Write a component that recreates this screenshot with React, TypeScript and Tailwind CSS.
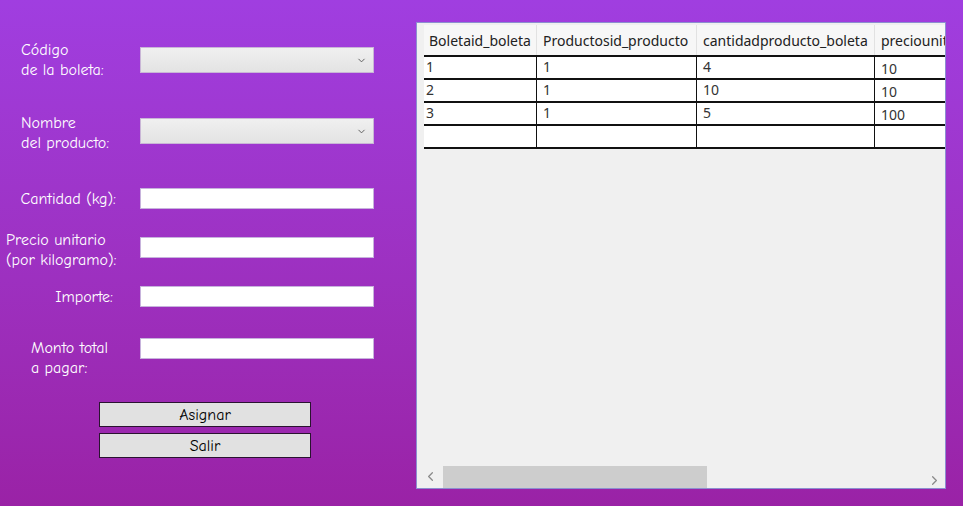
import { ChevronDown, ChevronLeft, ChevronRight } from "lucide-react";

const comic = { fontFamily: '"Comic Sans MS", "Comic Neue", Lato, sans-serif' };

type Row = { boleta: string; producto: string; cantidad: string; precio: string };

const rows: Row[] = [
  { boleta: "1", producto: "1", cantidad: "4", precio: "10" },
  { boleta: "2", producto: "1", cantidad: "10", precio: "10" },
  { boleta: "3", producto: "1", cantidad: "5", precio: "100" },
  { boleta: "", producto: "", cantidad: "", precio: "" },
];

function ComboBox() {
  return (
    <div className="flex h-[26px] w-[234px] items-center justify-end border border-[#c9b6d6] bg-gradient-to-b from-[#f0f0f0] to-[#e3e3e3] pr-[6px]">
      <ChevronDown size={11} strokeWidth={2} className="text-[#555]" />
    </div>
  );
}

function TextBox() {
  return <div className="h-[21px] w-[234px] border border-[#c7b3dc] bg-white" />;
}

function Button({ label }: { label: string }) {
  return (
    <div className="flex h-[25px] w-[212px] items-center justify-center border border-[#2a1330] bg-[#e1e1e1] text-[16px] text-black">
      {label}
    </div>
  );
}

export default function App() {
  return (
    <div className="flex h-[506px] w-[963px] overflow-hidden bg-gradient-to-b from-[#a03ee0] to-[#9a22a6]">
      <div className="flex w-[416px] shrink-0 flex-col text-[16px] text-white" style={comic}>
        <div className="mt-[40px] flex h-[40px]">
          <div className="w-[140px] pl-[21px] leading-[20px]">
            Código
            <br />
            de la boleta:
          </div>
          <div className="mt-[7px]">
            <ComboBox />
          </div>
        </div>

        <div className="mt-[33px] flex h-[40px]">
          <div className="w-[140px] pl-[21px] leading-[20px]">
            Nombre
            <br />
            del producto:
          </div>
          <div className="mt-[5px]">
            <ComboBox />
          </div>
        </div>

        <div className="mt-[35px] flex h-[21px] items-center">
          <div className="w-[116px] whitespace-nowrap text-right leading-[20px]">Cantidad (kg):</div>
          <div className="ml-[24px]">
            <TextBox />
          </div>
        </div>

        <div className="mt-[21px] flex h-[40px]">
          <div className="w-[140px] whitespace-nowrap pl-[6px] leading-[20px]">
            Precio unitario
            <br />
            (por kilogramo):
          </div>
          <div className="mt-[7px]">
            <TextBox />
          </div>
        </div>

        <div className="mt-[16px] flex h-[21px] items-center">
          <div className="w-[113px] text-right leading-[20px]">Importe:</div>
          <div className="ml-[27px]">
            <TextBox />
          </div>
        </div>

        <div className="mt-[31px] flex h-[40px]">
          <div className="w-[140px] whitespace-nowrap pl-[31px] leading-[20px]">
            Monto total
            <br />
            a pagar:
          </div>
          <div>
            <TextBox />
          </div>
        </div>

        <div className="ml-[99px] mt-[24px] flex flex-col gap-[6px]">
          <Button label="Asignar" />
          <Button label="Salir" />
        </div>
      </div>

      <div className="mt-[22px] flex h-[467px] w-[530px] flex-col overflow-hidden border border-[#8c8fd0] bg-[#f0f0f0] font-['Noto_Sans',sans-serif] text-[14px] text-[#222]">
        <div className="flex flex-1 pt-[2px]">
          <div className="w-[7px] shrink-0" />
          <div className="flex flex-col">
            <div className="flex h-[30px] bg-[#f7f7f7]">
              <div className="flex w-[113px] shrink-0 items-center border-r border-[#e2e2e2] pl-[5px]">Boletaid_boleta</div>
              <div className="flex w-[160px] shrink-0 items-center border-r border-[#e2e2e2] pl-[6px]">Productosid_producto</div>
              <div className="flex w-[178px] shrink-0 items-center border-r border-[#e2e2e2] pl-[6px]">cantidadproducto_boleta</div>
              <div className="flex w-[80px] shrink-0 items-center whitespace-nowrap pl-[6px]">preciounitario</div>
            </div>
            <div className="border-t-2 border-[#111]">
              {rows.map((r, i) => (
                <div key={i} className="flex h-[23px] border-b-2 border-[#111] bg-white leading-[19px] text-[#333]">
                  <div className="w-[113px] shrink-0 border-r border-[#111] pl-[2px]">{r.boleta}</div>
                  <div className="w-[160px] shrink-0 border-r border-[#111] pl-[6px]">{r.producto}</div>
                  <div className="w-[178px] shrink-0 border-r border-[#111] pl-[6px]">{r.cantidad}</div>
                  <div className="w-[80px] shrink-0 pl-[6px] pt-[2px]">{r.precio}</div>
                </div>
              ))}
            </div>
          </div>
        </div>
        <div className="flex h-[22px] items-center">
          <div className="flex w-[26px] justify-center pb-[2px]">
            <ChevronLeft size={15} strokeWidth={2} className="text-[#8a8a8a]" />
          </div>
          <div className="h-full w-[264px] bg-[#cdcdcd]" />
          <div className="flex-1" />
          <div className="flex w-[22px] justify-center pt-[6px]">
            <ChevronRight size={15} strokeWidth={2} className="text-[#8a8a8a]" />
          </div>
        </div>
      </div>
    </div>
  );
}
